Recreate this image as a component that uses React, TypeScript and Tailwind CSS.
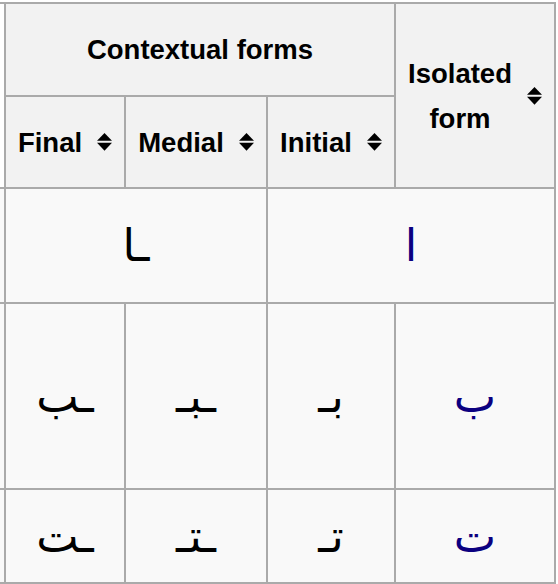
import React from "react";

function SortIcon() {
  return (
    <svg width="15" height="18" viewBox="0 0 15 18" className="shrink-0">
      <polygon points="7.5,0 15,7.7 0,7.7" fill="#000" />
      <polygon points="0,9.7 15,9.7 7.5,17.7" fill="#000" />
    </svg>
  );
}

function SortHead({ label }: { label: string }) {
  return (
    <div className="bg-[#f2f2f2] flex items-center justify-center gap-[15px] font-bold">
      <span>{label}</span>
      <SortIcon />
    </div>
  );
}

function Letter({ ch, blue, className = "" }: { ch: string; blue?: boolean; className?: string }) {
  return (
    <div
      className={`bg-[#f9f9f9] flex items-center justify-center ${className}`}
      style={{ fontFamily: '"DejaVu Sans", sans-serif' }}
    >
      <span className={`text-[45px] leading-none ${blue ? "text-[#0b0080]" : "text-black"}`}>{ch}</span>
    </div>
  );
}

const rows = [
  ["\u0640\u0628", "\u0640\u0628\u0640", "\u0628\u0640", "\u0628"],
  ["\u0640\u062a", "\u0640\u062a\u0640", "\u062a\u0640", "\u062a"],
];

export default function App() {
  return (
    <div className="w-[558px] h-[584px] bg-white pt-[2px]">
      <div
        className="w-[556px] bg-[#aaaaaa] grid grid-cols-[4px_118px_140px_126px_158px] grid-rows-[91px_90px_113px_184px_92px] gap-[2px] pt-[2px] pr-[2px] pb-[2px] text-[27.5px] leading-[45px] text-black"
        style={{ fontFamily: '"Liberation Sans", Arial, sans-serif' }}
      >
        <div className="row-span-2 bg-white" />
        <div className="col-span-3 bg-[#f2f2f2] flex items-center justify-center font-bold">
          Contextual forms
        </div>
        <div className="row-span-2 bg-[#f2f2f2] flex items-center justify-center gap-[15px] font-bold">
          <span className="text-center">
            Isolated
            <br />
            form
          </span>
          <SortIcon />
        </div>
        <SortHead label="Final" />
        <SortHead label="Medial" />
        <SortHead label="Initial" />

        <div className="bg-[#f9f9f9]" />
        <Letter ch={"\u0640\u0627"} className="col-span-2" />
        <Letter ch={"\u0627"} blue className="col-span-2" />

        {rows.map((r, i) => (
          <React.Fragment key={i}>
            <div className="bg-[#f9f9f9]" />
            {r.map((ch, j) => (
              <Letter key={j} ch={ch} blue={j === 3} />
            ))}
          </React.Fragment>
        ))}
      </div>
    </div>
  );
}
